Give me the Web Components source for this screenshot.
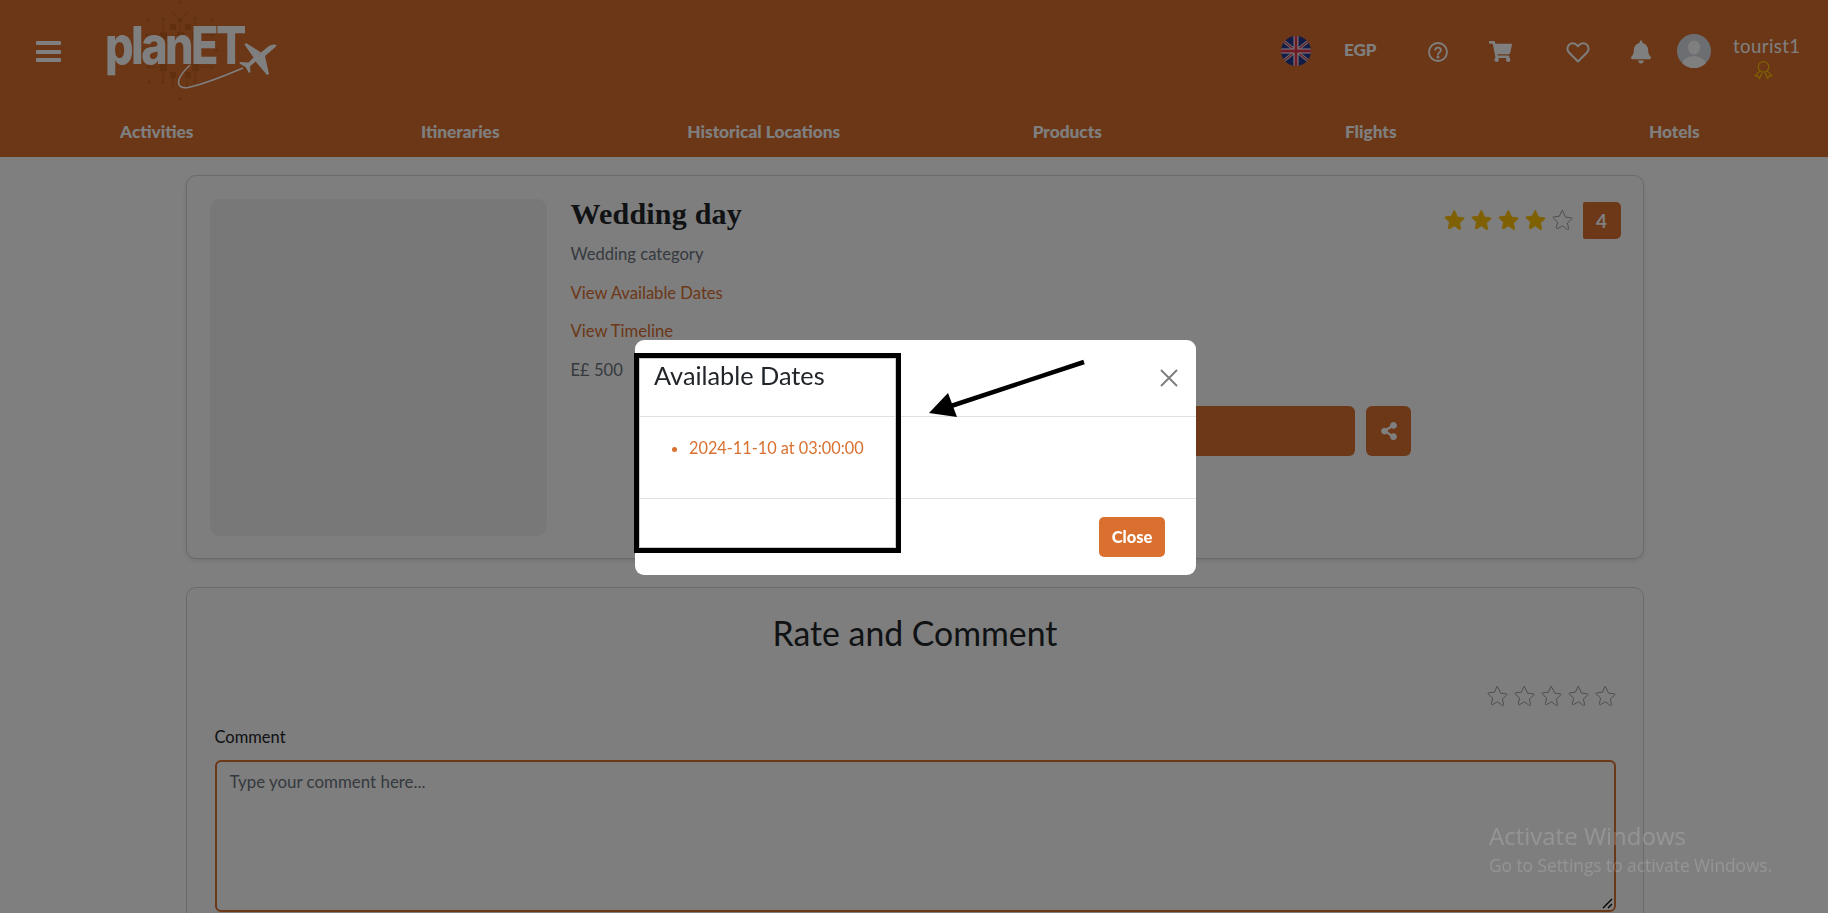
<!DOCTYPE html>
<html lang="en"><head><meta charset="utf-8"><title>Wedding day</title>
<style>
html,body{margin:0;height:913px;overflow:hidden;background:#fff}
body{font-family:Lato,"Open Sans",sans-serif;color:#212529}
</style></head><body>
<app-header></app-header>
<page-main>
  <activity-card></activity-card>
  <rate-card></rate-card>
</page-main>
<modal-dialog heading="Available Dates">
  <li>2024-11-10 at 03:00:00</li>
</modal-dialog>
<shot-annotation></shot-annotation>
<os-watermark></os-watermark>
<script>
const STAR='M12 2.4c.3 0 .6.2.7.5l2.5 5.6 6 .7c.7.1.9.9.4 1.3l-4.5 4.1 1.3 6c.1.7-.6 1.2-1.2.9L12 17.5l-5.2 3c-.6.3-1.3-.2-1.2-.9l1.3-6-4.5-4.100c-.5-.4-.3-1.200.4-1.300l6-.7 2.500-5.600c.100-.3.400-.5.700-.5z';
function def(name,html,init){
  customElements.define(name,class extends HTMLElement{
    constructor(){super();const r=this.attachShadow({mode:'open'});r.innerHTML=typeof html==='function'?html(this):html;}
  });
}
def('star-rating',h=>{
  const n=+h.getAttribute('value')||0;let s='';
  for(let i=0;i<5;i++)s+=`<svg viewBox="0 0 24 24" class="${i<n?'on':''}"><path d="${STAR}"/></svg>`;
  return `<style>:host{display:flex;gap:4px}svg{width:23px;height:23px;display:block}
  path{fill:none;stroke:#9a9a9a;stroke-width:1}.on path{fill:#ffc107;stroke:#ffc107}</style>${s}`;
});
def('plan-logo',`<style>:host{display:block;position:relative;width:175px;height:105px}
svg{position:absolute;left:0;top:0}
span{position:absolute;left:-1px;top:11px;font:800 52px/70px Inter,Lato,sans-serif;letter-spacing:-3px;color:#fff;transform:scaleX(.865);transform-origin:0 0}</style>
<svg width="175" height="105" viewBox="106 0 175 105">
<g fill="#c0601f"><rect x="170" y="24" width="6" height="6"/><rect x="185" y="24" width="6" height="6"/><rect x="160" y="32" width="7" height="7"/><rect x="177" y="32" width="7" height="7"/><rect x="192" y="32" width="7" height="7"/><rect x="160" y="64" width="7" height="7"/><rect x="192" y="64" width="7" height="7"/><rect x="170" y="72" width="6" height="6"/><rect x="185" y="72" width="6" height="6"/>
<circle cx="148" cy="20" r="1.500"/><circle cx="163" cy="19" r="1.500"/><circle cx="195" cy="18" r="1.500"/><circle cx="212" cy="20" r="1.500"/><circle cx="147" cy="35" r="1.500"/><circle cx="148" cy="67" r="1.500"/><circle cx="149" cy="82" r="1.500"/><circle cx="163" cy="82" r="1.500"/><circle cx="195" cy="82" r="1.500"/><circle cx="180" cy="99" r="1.500"/><circle cx="180" cy="2" r="1.500"/><circle cx="180" cy="20" r="2.500"/><circle cx="213" cy="35" r="1.500"/><circle cx="217" cy="50" r="1.500"/><circle cx="228" cy="50" r="1.500"/><circle cx="212" cy="67" r="1.500"/></g>
<g fill="none" stroke="#c0601f" stroke-width="1"><path d="M172 12l8 8 8-8M180 20v14M163 19v16M195 18v16M148 35h12M199 35h14M148 67h12M199 67h13M163 71v11M195 71v11M173 78v10M187 78v10"/></g>
<path fill="none" stroke="#fff" stroke-width="1.500" d="M243 68C222 77 204 84 188 87.500C176 89 174 80 190 65"/>
<path fill="#fff" d="M276.500 45C274 43.500 270 45 267 47.500L261 52.500 246 43 244.500 44.500 253.500 57.500 248.500 62.500 240 62 239.500 63.500 245.500 67 249 73 250.500 72 250 66.500 255.500 61.500 267 75 269 74 265 56 272 50C275 47.500 277 46 276.500 45z"/>
</svg><span>planET</span>`);
def('nav-bar',h=>`<style>:host{display:grid;grid-template-columns:repeat(6,1fr);padding:0 2px 0 5px;font:900 17.300px/20px Lato,sans-serif;color:#fff;text-align:center}</style>
${['Activities','Itineraries','Historical Locations','Products','Flights','Hotels'].map(t=>`<div>${t}</div>`).join('')}`);
def('app-header',`<style>:host{display:flex;flex-direction:column;height:157px;background:#d76e2f;color:#fff;box-sizing:border-box}
.top{display:flex;align-items:flex-start;height:122px}
.burger{width:25px;height:21px;margin:41px 45px 0 36px;display:flex;flex-direction:column;justify-content:space-between}
.burger i{height:4px;background:#fff;display:block;border-radius:1px}
.right{margin-left:auto;display:flex;align-items:flex-start}
.right>*{flex:none}
.flag{width:30px;height:30px;margin:36px 33px 0 0}
.egp{font:900 17px/20px Lato,sans-serif;margin:40px 50px 0 0;width:34px}
.q{width:20px;height:20px;margin:42px 41px 0 0}
.cart{width:23px;height:21px;margin:41px 54px 0 0}
.heart{width:24px;height:22px;margin:41px 41px 0 0}
.bell{width:20px;height:24px;margin:40px 26px 0 0}
.ava{width:34px;height:34px;margin:34px 22px 0 0}
.user{width:66px;margin-right:29px;text-align:center;font:400 18.600px/22px Lato,sans-serif;margin-top:35px;letter-spacing:.4px}
.user svg{display:block;margin:3px auto 0 21px;width:19px;height:19px}
</style>
<div class="top">
<div class="burger"><i></i><i></i><i></i></div>
<plan-logo></plan-logo>
<div class="right">
<svg class="flag" viewBox="0 0 30 30"><defs><clipPath id="c"><circle cx="15" cy="15" r="15"/></clipPath></defs><g clip-path="url(#c)"><rect width="30" height="30" fill="#24388c"/><path d="M0 3L30 27M30 3L0 27" stroke="#ddd" stroke-width="3"/><path d="M0 3L30 27M30 3L0 27" stroke="#d0304a" stroke-width="1.200"/><path d="M15 0V30M0 15H30" stroke="#fff" stroke-width="5"/><path d="M15 0V30M0 15H30" stroke="#e0344f" stroke-width="2.800"/></g></svg>
<div class="egp">EGP</div>
<svg class="q" viewBox="0 0 20 20" fill="none" stroke="#fff" stroke-width="1.800"><circle cx="10" cy="10" r="9"/><path d="M7.200 7.800a2.900 2.900 0 0 1 5.700.5c0 1.900-2.900 2.300-2.900 4.200" stroke-linecap="round"/><circle cx="10" cy="15" r=".6" fill="#fff"/></svg>
<svg class="cart" viewBox="0 0 576 512" fill="#fff" preserveAspectRatio="none"><path d="M528.120 301.319l47.273-208C578.806 78.301 567.391 64 551.990 64H159.208l-9.166-44.810C147.758 8.021 137.930 0 126.529 0H24C10.745 0 0 10.745 0 24v16c0 13.255 10.745 24 24 24h69.883l70.248 343.435C147.325 417.100 136 435.222 136 456c0 30.928 25.072 56 56 56s56-25.072 56-56c0-15.674-6.447-29.835-16.824-40h209.647C430.447 426.165 424 440.326 424 456c0 30.928 25.072 56 56 56s56-25.072 56-56c0-22.172-12.888-41.332-31.579-50.405l5.517-24.276c3.413-15.018-8.002-29.319-23.403-29.319H218.117l-6.545-32h293.145c11.206 0 20.920-7.754 23.403-18.681z"/></svg>
<svg class="heart" viewBox="0 0 24 22" fill="none" stroke="#fff" stroke-width="2"><path d="M12 20.500 3 11.500a5.400 5.400 0 0 1 0-7.600 5.400 5.400 0 0 1 7.600 0l1.400 1.400 1.400-1.400a5.400 5.400 0 0 1 7.600 0 5.400 5.400 0 0 1 0 7.600z" stroke-linejoin="round"/></svg>
<svg class="bell" viewBox="0 0 448 512" fill="#fff"><path d="M224 512c35.320 0 63.970-28.650 63.970-64H160.030c0 35.350 28.650 64 63.970 64zm215.390-149.710c-19.320-20.760-55.470-51.990-55.470-154.290 0-77.700-54.480-139.900-127.940-155.160V32c0-17.670-14.320-32-31.980-32s-31.980 14.330-31.980 32v20.840C118.560 68.100 64.080 130.300 64.080 208c0 102.300-36.150 133.530-55.470 154.290-6 6.450-8.660 14.160-8.610 21.710.11 16.400 12.980 32 32.100 32h383.800c19.120 0 32-15.600 32.100-32 .05-7.550-2.610-15.270-8.610-21.710z"/></svg>
<svg class="ava" viewBox="0 0 34 34"><defs><clipPath id="a"><circle cx="17" cy="17" r="17"/></clipPath></defs><g clip-path="url(#a)"><rect width="34" height="34" fill="#d8dce4"/><ellipse cx="17" cy="13.500" rx="6" ry="7" fill="#fff"/><ellipse cx="17" cy="31" rx="12" ry="9" fill="#fff"/></g></svg>
<div class="user">tourist1<svg viewBox="0 0 18 18" fill="none" stroke="#ffc107" stroke-width="1.200"><circle cx="9" cy="6.500" r="5"/><path d="M5.500 10.500 1 15l3 .5 1.200 2L7.500 12M12.500 10.500 17 15l-3 .5-1.200 2-2.300-5.500"/></svg></div>
</div></div>
<nav-bar></nav-bar>`);
def('page-main',`<style>:host{display:flex;flex-direction:column;gap:28px;width:1458px;margin:18px 0 0 185.500px}</style><slot></slot>`);
def('activity-card',`<style>:host{display:flex;gap:24px;box-sizing:border-box;height:384px;padding:23px 22px 22px 23px;border:1px solid #d4d4d4;border-radius:10px;background:#fcfcfc;box-shadow:0 2px 5px rgba(0,0,0,.1)}
.img{width:337px;height:337px;background:#f0f0f0;border-radius:10px;flex:none}
.c{flex:1;min-width:0;display:flex;flex-direction:column}
.top{display:flex;justify-content:space-between;align-items:flex-start;height:207px}
h1{margin:-1px 0 12px;font:700 30px/32px "Liberation Serif",serif;color:#212529;letter-spacing:.2px}
p{margin:0 0 14.500px;font:400 16.600px/24px Lato,sans-serif;color:#6c757d}
a{color:#d97030}
.rate{display:flex;align-items:center;gap:9px;margin-top:3px}
.badge{width:38px;height:37px;background:#d97030;color:#fff;border-radius:2px 5px 5px 2px;font:700 19px/37px Lato,sans-serif;text-align:center}
.act{display:flex;justify-content:flex-end;gap:11px;width:840px}
.act div{height:50px;background:#d97030;border-radius:6px}
.b{width:450px}.s{width:45px;display:flex;align-items:center;justify-content:center}
.s svg{width:16px;height:18px;margin-left:1px}
</style><div class="img"></div><div class="c"><div class="top"><div>
<h1>Wedding day</h1><p>Wedding category</p><p><a>View Available Dates</a></p><p><a>View Timeline</a></p><p>E£ 500</p></div>
<div class="rate"><star-rating value="4"></star-rating><div class="badge">4</div></div></div>
<div class="act"><div class="b"></div><div class="s"><svg viewBox="0 0 448 512" fill="#fff"><path d="M352 320c-22.608 0-43.387 7.819-59.790 20.895l-102.486-64.054a96.551 96.551 0 0 0 0-41.683l102.486-64.054C308.613 184.181 329.392 192 352 192c53.019 0 96-42.981 96-96S405.019 0 352 0s-96 42.981-96 96c0 7.158.79 14.130 2.276 20.841L155.790 180.895C139.387 167.819 118.608 160 96 160c-53.019 0-96 42.981-96 96s42.981 96 96 96c22.608 0 43.387-7.819 59.790-20.895l102.486 64.054A96.301 96.301 0 0 0 256 416c0 53.019 42.981 96 96 96s96-42.981 96-96-42.981-96-96-96z"/></svg></div></div></div>`);
def('rate-card',`<style>:host{display:block;box-sizing:border-box;height:400px;padding:24px 27px 0 28px;border:1px solid #d4d4d4;border-radius:10px;background:#fcfcfc}
h2{margin:0;text-align:center;font:400 33.800px/42px Lato,sans-serif;color:#212529}
star-rating{justify-content:flex-end;margin:31px -1px 0 0}
label{display:block;margin-top:17px;font:400 16.500px/24px Lato,sans-serif;color:#212529}
.ta{position:relative;box-sizing:border-box;height:152px;margin-top:11px;border:2px solid #d97030;border-radius:6px;padding:8px 13px;font:400 16.900px/24px Lato,sans-serif;color:#6c757d}
.ta svg{position:absolute;right:1px;bottom:1px}
</style><h2>Rate and Comment</h2><star-rating value="0"></star-rating><label>Comment</label>
<div class="ta">Type your comment here...<svg width="11" height="11" viewBox="0 0 11 11" stroke="#000" stroke-width="1.300"><path d="M1 10 10 1M6 10l4-4"/></svg></div>`);
def('modal-dialog',h=>`<style>:host{position:fixed;inset:0;display:flex;justify-content:center;align-items:flex-start;background:rgba(0,0,0,.5);padding-left:3px}
.d{margin-top:340px;width:561px;height:235px;box-sizing:border-box;background:#fff;border-radius:9px;display:flex;flex-direction:column;overflow:hidden}
.h{height:77px;box-sizing:border-box;border-bottom:1px solid #dee2e6;display:flex;justify-content:space-between;padding:17px 18px 0 19px}
h3{margin:0;font:400 25.300px/36px Lato,sans-serif;color:#212529}
.x{margin-top:12px;width:18px;height:18px}
.b{height:82px;box-sizing:border-box;border-bottom:1px solid #dee2e6;padding:19px 0 0 0}
ul{margin:0;padding:0 0 0 54px;color:#d97030;font:400 16.300px/24px Lato,sans-serif}
.f{flex:1;display:flex;justify-content:flex-end;padding:18px 31px 0 0}
button{width:66px;height:40px;border:0;border-radius:5px;background:#d97030;color:#fff;font:900 16.500px/38px Lato,sans-serif;padding:0}
</style><div class="d"><div class="h"><h3>${h.getAttribute('heading')}</h3><svg class="x" viewBox="0 0 18 18" stroke="#7b7b7b" stroke-width="1.800"><path d="M1 1 17 17M17 1 1 17"/></svg></div>
<div class="b"><ul><slot></slot></ul></div><div class="f"><button>Close</button></div></div>`);
def('shot-annotation',`<style>:host{position:fixed;inset:0;pointer-events:none;display:block}
.r{position:absolute;left:634px;top:353px;width:267px;height:200px;box-sizing:border-box;border:5px solid #000;outline:1px solid #ccc;outline-offset:-6px}
svg{position:absolute;left:920px;top:355px}</style><div class="r"></div>
<svg width="170" height="70" viewBox="920 355 170 70"><path d="M1084 362 945 408" stroke="#000" stroke-width="4.500"/><path d="M929 413 948 393 957 417z" fill="#000"/></svg>`);
def('os-watermark',`<style>:host{position:fixed;left:1489px;top:820px;display:block;color:rgba(255,255,255,.17);font-family:"Open Sans",sans-serif;white-space:nowrap}
div{font-size:24px;line-height:32px}p{margin:0;font-size:17.300px;line-height:28px}</style><div>Activate Windows</div><p>Go to Settings to activate Windows.</p>`);
</script>
</body></html>
